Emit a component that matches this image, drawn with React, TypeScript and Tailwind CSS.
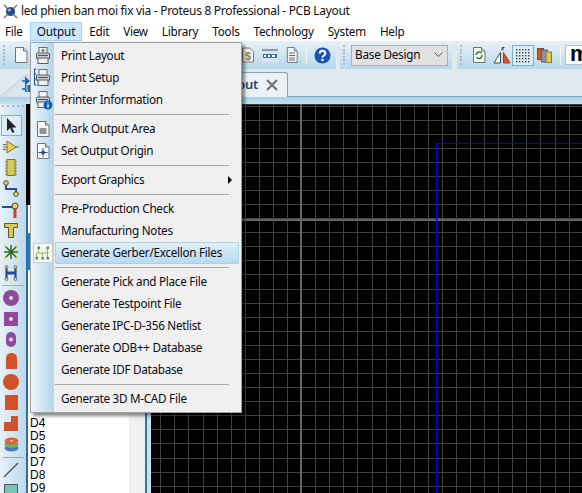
import React from "react";

const Printer = ({ badge }: { badge?: "green" | "ruler" | "info" }) => (
  <svg width="20" height="20" viewBox="0 0 20 20">
    {badge === "ruler" && <path d="M1.5 1v16M1.5 1h2M1.5 6h2M1.5 11h2M1.5 17h2" stroke="#1d4fa0" strokeWidth="1" fill="none" />}
    <rect x="6" y="1.5" width="8" height="6" fill="#f4f4f4" stroke="#6a6f75" />
    <rect x="3.5" y="7" width="13" height="6" rx="1" fill="#c6cacf" stroke="#5a5f66" />
    <rect x="5" y="12" width="10" height="5.5" fill="#efefef" stroke="#5a5f66" />
    <rect x="5" y="9" width="10" height="1" fill="#50565c" />
    {badge === "green" && <path d="M10 3v3M8.5 4.5h3" stroke="#19a33c" strokeWidth="1.4" />}
    {badge === "info" && (
      <g>
        <circle cx="15" cy="15" r="4.5" fill="#1261b8" />
        <path d="M15 12.5v.8M15 14.5v3" stroke="#fff" strokeWidth="1.4" />
      </g>
    )}
  </svg>
);

const DocIcon = ({ children, w = 14 }: { children?: React.ReactNode; w?: number }) => (
  <svg className="shrink-0" width={w} height="16" viewBox="0 0 14 16" preserveAspectRatio="none">
    <path d="M1.5.5h8l3.5 3.5v11.5h-11.5z" fill="#f8f8f8" stroke="#6e7378" />
    <path d="M9.5.5v3.5h3.5" fill="#dcdcdc" stroke="#6e7378" />
    {children}
  </svg>
);

const GutterIcon = ({ children, boxed }: { children?: React.ReactNode; boxed?: boolean }) => (
  <div className={boxed ? "w-[20px] h-[20px] ml-[2px] flex items-center justify-center bg-[#f4f7f4] border border-[#c9ccc9]" : "w-[20px] h-[20px] ml-[2px] flex items-center justify-center"}>
    {children}
  </div>
);

const Item = ({ label, icon, hot, sub, boxed }: { label: string; icon?: React.ReactNode; hot?: boolean; sub?: boolean; boxed?: boolean }) => (
  <div className="flex h-[22px] items-center">
    <div className="w-[24px] shrink-0 flex items-center">{icon && <GutterIcon boxed={boxed}>{icon}</GutterIcon>}</div>
    <div
      className={
        hot
          ? "flex flex-1 h-[22px] mr-[2px] items-center pl-[5px] border border-[#a9d2e8] rounded-[1px] bg-gradient-to-b from-[#e0eff9] to-[#b7daef]"
          : "flex flex-1 h-[22px] mr-[2px] items-center pl-[6px]"
      }
    >
      <span className="flex-1 text-[11.7px] tracking-[-0.27px]">{label}</span>
      {sub && <span className="mr-[7px] w-0 h-0 border-y-[4px] border-y-transparent border-l-[4px] border-l-black" />}
    </div>
  </div>
);

const Sep = () => (
  <div className="h-[7px] flex items-center pl-[24px] pr-[12px]">
    <div className="h-px w-full bg-[#a8a8a8]" />
  </div>
);

const Grip = () => (
  <div className="w-[3px] h-[20px] shrink-0 flex flex-col justify-between">
    {[0, 1, 2, 3, 4, 5].map((i) => (
      <div key={i} className="w-[2px] h-[2px] bg-[#a9bac6]" />
    ))}
  </div>
);

const Tool = ({ children }: { children: React.ReactNode }) => (
  <div className="h-[21px] w-[22px] flex items-center justify-center">{children}</div>
);

const ToolSep = () => (
  <div className="h-[4px] flex items-center pl-[2px] w-[24px]">
    <div className="h-px w-full bg-[#a9a9a9]" />
  </div>
);

const Canvas = () => {
  const xs = Array.from({ length: 31 }, (_, i) => Math.round(9.3 + i * 14.08));
  const ys = Array.from({ length: 29 }, (_, i) => Math.round(1.5 + i * 14.08));
  return (
    <svg className="block" width="431" height="389">
      <rect width="431" height="389" fill="#000" />
      {xs.map((x) => (
        <rect key={x} x={x} y="0" width="1" height="389" fill="#414141" />
      ))}
      {ys.map((y) => (
        <rect key={y} x="0" y={y} width="431" height="1" fill="#414141" />
      ))}
      <rect x="0" y="0" width="431" height="1" fill="#3a3a3a" />
      <rect x="149" y="0" width="2" height="389" fill="#666" />
      <rect x="0" y="115" width="431" height="2" fill="#666" />
      <rect x="285" y="39" width="1.5" height="350" fill="#0000d8" />
      <rect x="285" y="39" width="146" height="1" fill="#0000d0" />
    </svg>
  );
};

export default function App() {
  return (
    <div className="relative w-[582px] h-[493px] overflow-hidden bg-white text-[12px] text-[#0a0a14] font-['Noto_Sans',sans-serif]">
      {/* title bar */}
      <div className="h-[22px] flex items-center pl-[3px] gap-[3px]">
        <svg width="15" height="15" viewBox="0 0 15 15">
          <path d="M1 1l13 13M14 1L1 14" stroke="#7a6f5f" strokeWidth="1.4" />
          <circle cx="7.5" cy="7.5" r="4.6" fill="#2d4f86" />
          <circle cx="6.3" cy="6" r="1.6" fill="#9db7da" />
        </svg>
        <span className="tracking-[-0.3px] text-[#111]">led phien ban moi fix via - Proteus 8 Professional - PCB Layout</span>
      </div>

      {/* menu bar */}
      <div className="h-[19px] flex items-center -ml-[2px] text-[11.7px]">
        {["File", "Output", "Edit", "View", "Library", "Tools", "Technology", "System", "Help"].map((m) => (
          <div
            key={m}
            className={
              m === "Output"
                ? "h-[19px] px-[6px] flex items-center bg-[#cce8ff] border border-[#99d1ff] tracking-[-0.1px]"
                : "h-[19px] px-[7px] flex items-center tracking-[-0.25px]"
            }
          >
            {m}
          </div>
        ))}
      </div>

      {/* toolbars */}
      <div className="h-[28px] flex bg-[#e1e9f0]">
        <div className="w-[336px] flex items-center pl-[3px] pr-[5px] bg-gradient-to-b from-[#e8f1f7] to-[#b8d8ea]">
          <Grip />
          <div className="ml-[8px]">
            <DocIcon />
          </div>
          <div className="ml-auto flex items-center gap-[8px]">
            <svg width="12" height="16" viewBox="0 0 13 16">
              <path d="M.5.5h8l4 4v11h-12z" fill="#f6f5ee" stroke="#6e7378" />
              <text x="6.5" y="13" fontSize="11" fontFamily="Liberation Sans, sans-serif" fontWeight="700" textAnchor="middle" fill="#8a7a2a">$</text>
            </svg>
            <svg width="16" height="14" viewBox="0 0 16 14">
              <rect x="0" y="0" width="16" height="14" fill="#dbe4ef" />
              <rect x="0" y="1" width="16" height="2" fill="#8f9aa8" />
              <rect x="1" y="6" width="14" height="4" fill="#3c6bb0" />
              <rect x="2" y="7" width="2" height="2" fill="#fff" />
              <rect x="6" y="7" width="2" height="2" fill="#fff" />
              <rect x="10" y="7" width="3" height="2" fill="#fff" />
            </svg>
            <DocIcon w={12}>
              <path d="M3.5 6h7M3.5 8.5h7M3.5 11h7M3.5 13h7" stroke="#5a5f66" strokeWidth="1" />
            </DocIcon>
            <div className="w-px h-[20px] bg-[#f3f7fa]" />
            <svg className="-ml-px" width="17" height="17" viewBox="0 0 18 18">
              <circle cx="9" cy="9" r="8.5" fill="#1753b8" />
              <path d="M6 7c0-4 6-4 6 0 0 2-3 2-3 4" stroke="#fff" strokeWidth="2.2" fill="none" />
              <rect x="7.8" y="12.5" width="2.4" height="2.4" fill="#fff" />
            </svg>
          </div>
        </div>
        <div className="ml-[4px] w-[112px] flex items-center pl-[3px] bg-gradient-to-b from-[#e8f1f7] to-[#b8d8ea]">
          <Grip />
          <div className="ml-[5px] w-[97px] h-[21px] shrink-0 flex items-center justify-between px-[3px] bg-[#e1e1e1] border border-[#adadad] text-[11.7px] tracking-[-0.2px]">
            <span>Base Design</span>
            <svg className="mr-[1px]" width="9" height="6" viewBox="0 0 9 6">
              <path d="M.5.5l4 4 4-4" stroke="#555" fill="none" />
            </svg>
          </div>
        </div>
        <div className="ml-[5px] flex-1 flex items-center pl-[3px] bg-gradient-to-b from-[#e8f1f7] to-[#b8d8ea] overflow-hidden">
          <Grip />
          <div className="ml-[9px] shrink-0">
            <DocIcon>
              <path d="M4 8a3.2 3.2 0 0 1 5.5-2M10 8a3.2 3.2 0 0 1-5.5 2.5" stroke="#1b8a2a" strokeWidth="1.5" fill="none" />
            </DocIcon>
          </div>
          <svg className="ml-[7px] shrink-0" width="18" height="17" viewBox="0 0 18 17">
            <path d="M7.5 5.5v10.5h-6.5z" fill="#fff" stroke="#444" />
            <path d="M10.5 5.5v10.5h6.5z" fill="#d9512a" stroke="#a83a1a" />
            <path d="M9 .5v3" stroke="#444" />
            <path d="M9 .5h2.5M9 2h2" stroke="#444" />
          </svg>
          <div className="ml-[1px] w-[22px] h-[21px] shrink-0 flex items-center justify-center bg-[#dcebf4] border border-[#7eb0c9]">
            <svg width="16" height="15" viewBox="0 0 16 15">
              {[1, 4, 7, 10, 13].map((y) =>
                [1, 4, 7, 10, 13].map((x) => <rect key={`${x}-${y}`} x={x} y={y} width="1.4" height="1.4" fill="#3b4046" />),
              )}
            </svg>
          </div>
          <svg className="ml-[3px] shrink-0" width="15" height="16" viewBox="0 0 15 16">
            <rect x=".5" y="1.5" width="6" height="11" fill="#c55a2a" stroke="#7c4a2a" />
            <rect x="4.5" y="3" width="6" height="12" fill="#8c8fb8" stroke="#5a5f80" />
            <rect x="9" y="5" width="5.5" height="10.5" fill="#e2c94a" stroke="#8a7a2a" />
          </svg>
          <div className="ml-[8px] w-px h-[20px] shrink-0 bg-[#f3f7fa]" />
          <div className="ml-[4px] h-[20px] w-[30px] shrink-0 bg-white border border-[#b7c3cc] pl-[4px] text-black font-bold text-[22px] leading-[16px] font-['Liberation_Sans',sans-serif]">
            m
          </div>
        </div>
      </div>

      {/* tab band */}
      <div className="h-[28px] flex bg-[#e1e9f0]">
        <svg className="shrink-0 block" width="30" height="28" viewBox="0 0 30 28">
          <path d="M0 28L26 6h4v22z" fill="#d9e4ec" />
          <path d="M0 28L26 6h4" stroke="#b9cbd8" fill="none" />
          <path d="M22 12h3M22 20h3" stroke="#1b5fa8" strokeWidth="1.4" />
          <path d="M25 7.5v9l5-4.5z" fill="#1d63b0" />
          <rect x="25" y="16" width="5" height="7" fill="#1d63b0" />
          <rect x="26.5" y="16" width="1" height="7" fill="#d9e4ec" />
        </svg>
        <div className="w-[258px] h-[25px] mt-[3px] flex items-center justify-end bg-[#ebf1f6] border-t border-r border-[#7fa8bf] rounded-tr-[3px] pr-[9px] gap-[8px]">
          <span className="font-semibold text-[13px] text-[#1b4a78] tracking-[-0.3px]">PCB Layout</span>
          <svg width="12" height="12" viewBox="0 0 12 12">
            <path d="M1 1l10 10M11 1L1 11" stroke="#6b6f73" strokeWidth="2" />
          </svg>
        </div>
        <div className="flex-1 border-b border-[#7fa8bf]" />
      </div>
      <div className="h-[7px] bg-gradient-to-b from-[#a9cfe4] to-[#c6e0f0]" />

      {/* body */}
      <div className="h-[389px] flex">
        <div className="w-[26px] shrink-0 bg-gradient-to-r from-[#e8f1f8] to-[#bcd9ec] pt-[1px]">
          <div className="flex gap-[3px] pl-[2px] h-[10px]">
            {[0, 1, 2, 3, 4].map((i) => (
              <div key={i} className="w-[2px] h-[2px] bg-[#a9bac6]" />
            ))}
          </div>
          <div className="h-[21px] w-[21px] ml-[1px] flex items-center justify-center bg-[#dcebf4] border border-[#7eb0c9]">
            <svg width="11" height="15" viewBox="0 0 11 15">
              <path d="M1 0v13l3-3 2.5 5 2-1-2.5-4.5h4.5z" fill="#222" />
            </svg>
          </div>
          <Tool>
            <svg width="16" height="14" viewBox="0 0 16 14">
              <path d="M0 7h4M12 7h4M3 4.5h-3M3 9.5h-3" stroke="#6e6a30" />
              <path d="M4 1v12l9-6z" fill="#e6cf54" stroke="#7e7426" />
            </svg>
          </Tool>
          <Tool>
            <svg width="12" height="17" viewBox="0 0 12 17">
              <path d="M0 3h12M0 6h12M0 9h12M0 12h12M0 15h12" stroke="#7e7426" />
              <rect x="2" y=".5" width="8" height="16" fill="#d9c95a" stroke="#7e7426" />
            </svg>
          </Tool>
          <Tool>
            <svg width="16" height="17" viewBox="0 0 16 17">
              <path d="M3 3v6h10v5" stroke="#274a9c" strokeWidth="2" fill="none" />
              <circle cx="3" cy="3" r="2.3" fill="#e8d850" stroke="#444" />
              <circle cx="13" cy="14" r="2.3" fill="#e8d850" stroke="#444" />
            </svg>
          </Tool>
          <Tool>
            <svg width="18" height="17" viewBox="0 0 18 17">
              <path d="M0 6h11" stroke="#274a9c" strokeWidth="2" />
              <path d="M13 8v9" stroke="#c5441e" strokeWidth="3" />
              <circle cx="13" cy="5" r="3" fill="#e8d850" stroke="#444" />
            </svg>
          </Tool>
          <Tool>
            <svg width="14" height="15" viewBox="0 0 14 15">
              <path d="M.5.5h13v4h-4v10h-5v-10h-4z" fill="#d9c95a" stroke="#5e5820" />
            </svg>
          </Tool>
          <Tool>
            <svg width="16" height="16" viewBox="0 0 16 16">
              <path d="M8 1v14M1 8h14M2 2l12 12M14 2L2 14" stroke="#2f6b22" strokeWidth="1.5" />
              <circle cx="2" cy="2" r="1.3" fill="#e8d850" />
              <circle cx="14" cy="2" r="1.3" fill="#e8d850" />
              <circle cx="2" cy="14" r="1.3" fill="#e8d850" />
              <circle cx="14" cy="14" r="1.3" fill="#e8d850" />
            </svg>
          </Tool>
          <Tool>
            <svg width="14" height="16" viewBox="0 0 14 16">
              <path d="M2.5 2v12M11.5 2v12" stroke="#274a9c" strokeWidth="2.2" />
              <path d="M2.5 8h9" stroke="#274a9c" strokeWidth="3" />
              <circle cx="2.5" cy="2" r="1.5" fill="#e8d850" stroke="#444" strokeWidth=".6" />
              <circle cx="11.5" cy="2" r="1.5" fill="#e8d850" stroke="#444" strokeWidth=".6" />
              <circle cx="2.5" cy="14" r="1.5" fill="#e8d850" stroke="#444" strokeWidth=".6" />
              <circle cx="11.5" cy="14" r="1.5" fill="#e8d850" stroke="#444" strokeWidth=".6" />
            </svg>
          </Tool>
          <ToolSep />
          <Tool>
            <svg width="16" height="16" viewBox="0 0 16 16">
              <circle cx="8" cy="8" r="8" fill="#8f4a9c" />
              <circle cx="8" cy="8" r="2" fill="#e6d8ea" />
            </svg>
          </Tool>
          <Tool>
            <svg width="14" height="14" viewBox="0 0 14 14">
              <rect width="14" height="14" fill="#8f4a9c" />
              <circle cx="7" cy="7" r="2" fill="#e6d8ea" />
            </svg>
          </Tool>
          <Tool>
            <svg width="10" height="15" viewBox="0 0 10 15">
              <rect width="10" height="15" rx="5" fill="#8f4a9c" />
              <circle cx="5" cy="7.5" r="2" fill="#e6d8ea" />
            </svg>
          </Tool>
          <Tool>
            <div className="w-[11px] h-[16px] rounded-t-[5px] bg-[#d2502a]" />
          </Tool>
          <Tool>
            <div className="w-[16px] h-[16px] rounded-full bg-[#d2502a]" />
          </Tool>
          <Tool>
            <div className="w-[13px] h-[15px] bg-[#d2502a]" />
          </Tool>
          <Tool>
            <svg width="14" height="15" viewBox="0 0 14 15">
              <path d="M7 0h7v15h-14v-9h7z" fill="#d2502a" />
            </svg>
          </Tool>
          <Tool>
            <svg width="15" height="15" viewBox="0 0 15 15">
              <ellipse cx="7.5" cy="11" rx="7" ry="3.5" fill="#4a78c0" />
              <ellipse cx="7.5" cy="7.5" rx="7" ry="3.5" fill="#6fb05a" />
              <ellipse cx="7.5" cy="4" rx="7" ry="3.5" fill="#e2603a" />
              <circle cx="7.5" cy="4" r="1" fill="#fff" />
            </svg>
          </Tool>
          <ToolSep />
          <Tool>
            <svg width="16" height="16" viewBox="0 0 16 16">
              <path d="M1 15L15 1" stroke="#4a4f55" strokeWidth="1.2" />
            </svg>
          </Tool>
          <Tool>
            <div className="w-[14px] h-[14px] bg-[#7fc0b8] border border-[#45605c]" />
          </Tool>
        </div>

        {/* component column */}
        <div className="w-[125px] shrink-0 flex flex-col">
          <div className="h-[101px] shrink-0 bg-black" />
          <div className="flex-1 min-h-0 overflow-hidden flex">
            <div className="w-[2px] bg-[#2a6f9e]" />
            <div className="w-[101px] bg-white leading-[13px] text-[12px] text-black font-['Liberation_Sans',sans-serif]">
              <div className="h-[28px]" />
              <div className="h-[37px] bg-[#1f78c8]" />
              <div className="h-[147px]" />
              {["D4", "D5", "D6", "D7", "D8", "D9"].map((d) => (
                <div key={d} className="pl-[2px] h-[13px]">{d}</div>
              ))}
            </div>
            <div className="w-[16px] bg-[#f0f0f0]" />
            <div className="w-[2px] bg-[#2a77b0]" />
            <div className="w-[4px] bg-[#cfdfe8]" />
          </div>
        </div>

        <Canvas />
      </div>

      {/* Output dropdown */}
      <div className="absolute left-[30px] top-[42px] w-[212px] h-[371px] bg-[#f0f0f0] border border-[#a0a0a0] shadow-[3px_3px_3px_rgba(0,0,0,0.45)]">
        <div className="absolute left-0 top-0 bottom-0 w-[23px] bg-gradient-to-r from-[#eef5fa] to-[#b3d5ea]" />
        <div className="relative pt-[2px]">
          <Item label="Print Layout" icon={<Printer badge="green" />} />
          <Item label="Print Setup" icon={<Printer badge="ruler" />} />
          <Item label="Printer Information" icon={<Printer badge="info" />} />
          <Sep />
          <Item label="Mark Output Area" icon={<DocIcon><rect x="3.5" y="7" width="7" height="6" fill="#8d9196" /></DocIcon>} />
          <Item label="Set Output Origin" icon={<DocIcon><path d="M7 5v9M2.5 9.5h9" stroke="#2848a8" /><circle cx="7" cy="9.5" r="2" fill="#2848a8" /></DocIcon>} />
          <Sep />
          <Item label="Export Graphics" sub />
          <Sep />
          <Item label="Pre-Production Check" />
          <Item label="Manufacturing Notes" />
          <Item
            label="Generate Gerber/Excellon Files"
            hot
            boxed
            icon={
              <svg width="16" height="16" viewBox="0 0 16 16">
                <path d="M3.5 3v5M12.5 3v5M1.5 8h12M1.5 8v5M7.5 8v5M12.5 8v5" stroke="#8dbb55" fill="none" />
                <rect x="2.5" y="1.5" width="2.5" height="2.5" fill="#5f8a45" />
                <rect x="11.5" y="1.5" width="2.5" height="2.5" fill="#5f8a45" />
                <rect x="0.5" y="12" width="2.5" height="2.5" fill="#5f8a45" />
                <rect x="6.5" y="12" width="2.5" height="2.5" fill="#5f8a45" />
                <rect x="11.5" y="12" width="2.5" height="2.5" fill="#5f8a45" />
              </svg>
            }
          />
          <Sep />
          <Item label="Generate Pick and Place File" />
          <Item label="Generate Testpoint File" />
          <Item label="Generate IPC-D-356 Netlist" />
          <Item label="Generate ODB++ Database" />
          <Item label="Generate IDF Database" />
          <Sep />
          <Item label="Generate 3D M-CAD File" />
        </div>
      </div>
    </div>
  );
}
